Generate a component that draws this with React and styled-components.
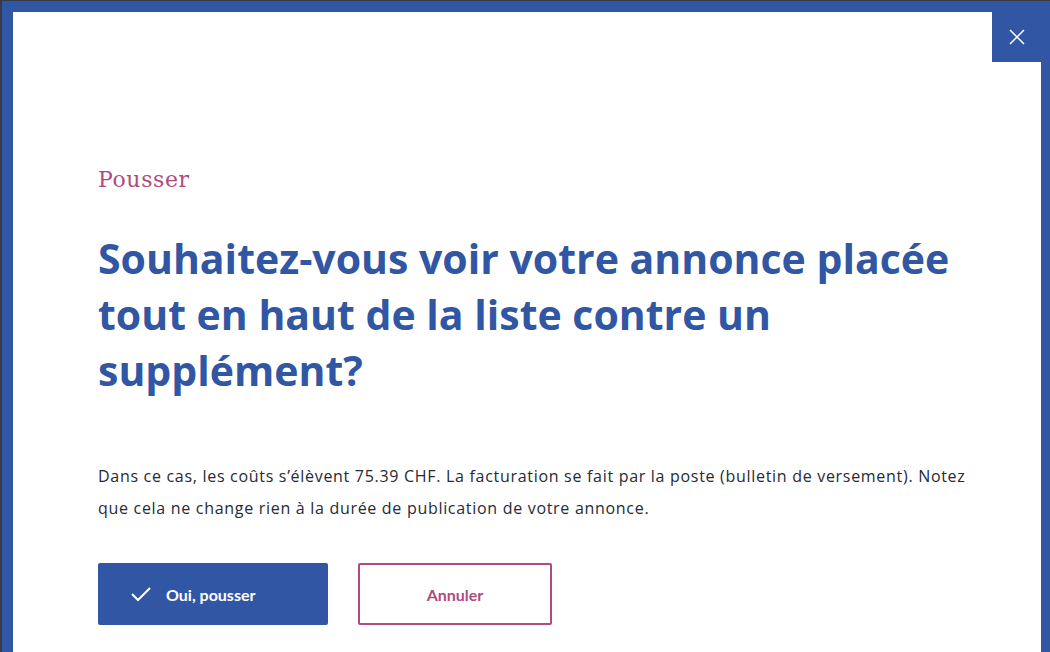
import React from "react";
import styled, { createGlobalStyle } from "styled-components";

const Global = createGlobalStyle`
  html, body { margin: 0; padding: 0; }
  body {
    background: #363b47;
    overflow: hidden;
    width: 1050px;
    height: 652px;
  }
`;

const Overlay = styled.div`
  width: 1050px;
  height: 652px;
  padding: 1px 0 0 2px;
  box-sizing: border-box;
  overflow: hidden;
`;

const Modal = styled.div`
  position: relative;
  width: 1050px;
  height: 700px;
  box-sizing: border-box;
  background: #ffffff;
  border: 11px solid #3157a4;
`;

const CloseButton = styled.button`
  position: absolute;
  top: 0;
  right: 0;
  width: 49px;
  height: 50px;
  border: 0;
  padding: 0;
  background: #3157a4;
  display: flex;
  align-items: center;
  justify-content: center;
  cursor: pointer;
`;

const Content = styled.div`
  padding: 154px 50px 0 85px;
  display: flex;
  flex-direction: column;
`;

const Kicker = styled.div`
  font-family: "DejaVu Serif", serif;
  font-size: 22px;
  line-height: 28px;
  color: #b04b7d;
  letter-spacing: 0.6px;
`;

const Title = styled.h1`
  margin: 36px 0 0 0;
  font-family: "Open Sans", sans-serif;
  font-weight: 700;
  font-size: 41px;
  line-height: 56px;
  color: #3156a3;
  max-width: 880px;
`;

const Text = styled.p`
  margin: 62px 0 0 0;
  font-family: "Open Sans", sans-serif;
  font-size: 16px;
  letter-spacing: 0.7px;
  line-height: 32px;
  color: #262a36;
  max-width: 885px;
`;

const Actions = styled.div`
  display: flex;
  gap: 30px;
  margin-top: 39px;
`;

const Button = styled.button`
  height: 62px;
  width: ${(p) => p.$w}px;
  box-sizing: border-box;
  border-radius: 2px;
  display: flex;
  align-items: center;
  justify-content: ${(p) => (p.$primary ? "flex-start" : "center")};
  gap: 15px;
  padding: 0 0 0 ${(p) => (p.$primary ? 31 : 0)}px;
  font-family: "Lato", sans-serif;
  font-weight: 700;
  font-size: 16px;
  cursor: pointer;
  background: ${(p) => (p.$primary ? "#3157a4" : "#ffffff")};
  color: ${(p) => (p.$primary ? "#ffffff" : "#b04b7d")};
  border: 2px solid ${(p) => (p.$primary ? "#3157a4" : "#b04b7d")};
`;

export default function App() {
  return (
    <>
      <Global />
      <Overlay>
        <Modal>
          <CloseButton aria-label="Fermer">
            <svg width="16" height="16" viewBox="0 0 16 16">
              <path d="M1 1 L15 15 M15 1 L1 15" stroke="#ffffff" strokeWidth="1.5" fill="none" />
            </svg>
          </CloseButton>
          <Content>
            <Kicker>Pousser</Kicker>
            <Title>
              Souhaitez-vous voir votre annonce placée tout en haut de la liste contre un supplément?
            </Title>
            <Text>
              Dans ce cas, les coûts s’élèvent 75.39 CHF. La facturation se fait par la poste (bulletin de versement). Notez que cela ne change rien à la durée de publication de votre annonce.
            </Text>
            <Actions>
              <Button $primary $w={230}>
                <svg width="20" height="16" viewBox="0 0 20 16">
                  <path d="M1 8 L7 14 L19 2" stroke="#ffffff" strokeWidth="2" fill="none" />
                </svg>
                Oui, pousser
              </Button>
              <Button $w={194}>Annuler</Button>
            </Actions>
          </Content>
        </Modal>
      </Overlay>
    </>
  );
}
